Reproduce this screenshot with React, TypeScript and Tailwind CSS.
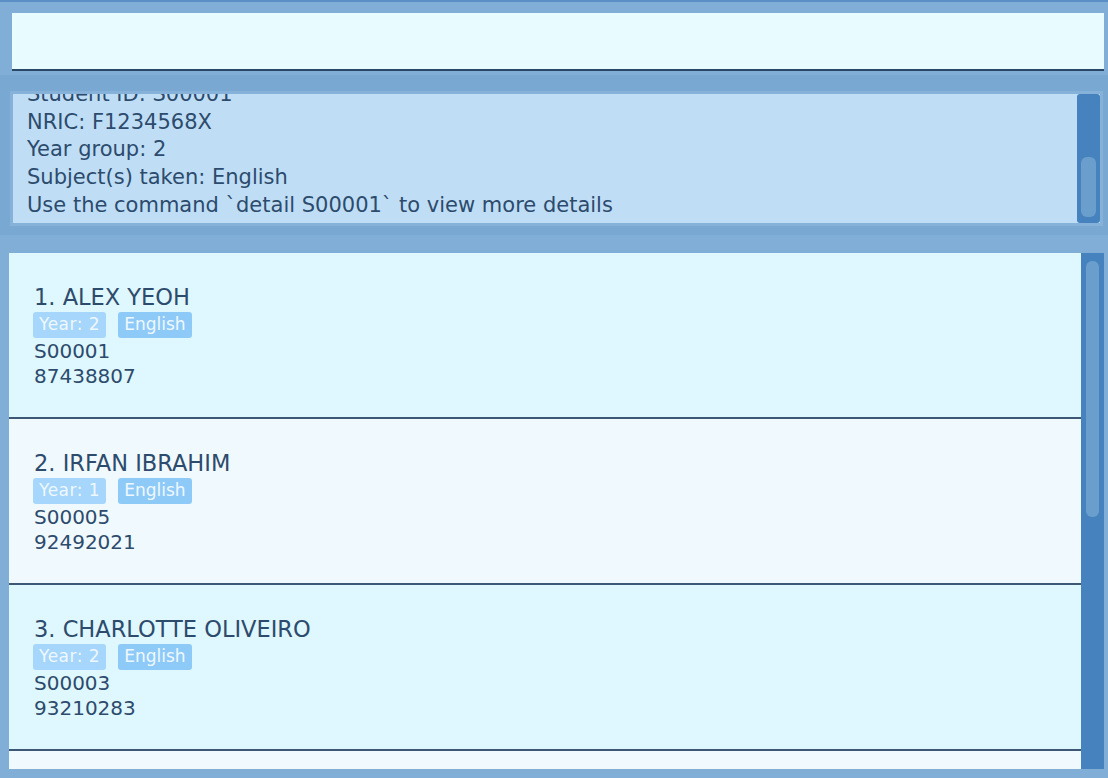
import React from "react";

const students = [
  { idx: 1, name: "ALEX YEOH", year: 2, subject: "English", id: "S00001", phone: "87438807" },
  { idx: 2, name: "IRFAN IBRAHIM", year: 1, subject: "English", id: "S00005", phone: "92492021" },
  { idx: 3, name: "CHARLOTTE OLIVEIRO", year: 2, subject: "English", id: "S00003", phone: "93210283" },
];

const font = { fontFamily: '"DejaVu Sans", Verdana, sans-serif' };

function StudentCard({ s, odd }: { s: (typeof students)[number]; odd: boolean }) {
  return (
    <div
      className={`h-[166px] shrink-0 border-b-2 border-[#3d5877] pl-[25px] pt-[31px] ${
        odd ? "bg-[#dff7fe]" : "bg-[#f0f9fe]"
      }`}
    >
      <div className="text-[22.5px] leading-[26px] text-[#2d4b6c]">
        {s.idx}. {s.name}
      </div>
      <div className="mt-[2px] flex gap-[12px] -ml-[1px]">
        <span className="flex h-[26px] items-center rounded-[3px] bg-[#a6d6fb] px-[6px] text-[17px] tracking-[0.5px] text-[#eef8ff]">
          Year: {s.year}
        </span>
        <span className="flex h-[26px] items-center rounded-[3px] bg-[#8ecaf8] px-[6px] text-[17px] text-[#eef8ff]">
          {s.subject}
        </span>
      </div>
      <div className="mt-[1px] text-[20px] leading-[25px] text-[#2d4b6c]">{s.id}</div>
      <div className="text-[20px] leading-[25px] text-[#2d4b6c]">{s.phone}</div>
    </div>
  );
}

export default function App() {
  return (
    <div className="flex h-[778px] w-[1108px] flex-col overflow-hidden bg-[#80aed7]" style={font}>
      {/* COMMAND BOX */}
      <div className="h-[75px] shrink-0 border-t-2 border-[#5b8ec4] px-[12px] pt-[11px]">
        <div className="h-[58px] w-[1092px] border-b-2 border-[#2a4766] bg-[#e8fbfe]" />
      </div>

      {/* RESULT DISPLAY */}
      <div className="h-[160px] shrink-0 bg-[#79a9d3] px-[10px] pt-[16px]">
        <div className="flex h-[135px] w-[1093px] border-[3px] border-[#86b2d9] bg-[#bfdef6]">
          <div className="flex-1 overflow-hidden pl-[14px] text-[21px] leading-[27.67px] text-[#2d4b6c]">
            <div className="-mt-[13px]">
              <div>Student ID: S00001</div>
              <div>NRIC: F1234568X</div>
              <div>Year group: 2</div>
              <div>Subject(s) taken: English</div>
              <div>Use the command `detail S00001` to view more details</div>
            </div>
          </div>
          <div className="ml-[2px] flex w-[23px] shrink-0 flex-col rounded-[3px] bg-[#4682be] px-[4px] pt-[63px] pb-[6px]">
            <div className="h-[60px] rounded-[6px] bg-[#6a9fcd]" />
          </div>
        </div>
      </div>

      {/* STUDENT LIST */}
      <div className="flex-1 px-[9px] pt-[18px] pb-[9px]">
        <div className="flex h-[516px] w-[1095px] overflow-hidden">
          <div className="flex flex-1 flex-col overflow-hidden">
            {students.map((s, i) => (
              <StudentCard key={s.id} s={s} odd={i % 2 === 0} />
            ))}
            <div className="flex-1 bg-[#f0f9fe]" />
          </div>
          <div className="w-[23px] shrink-0 bg-[#4682be] px-[5px] pt-[8px]">
            <div className="h-[256px] rounded-[6px] bg-[#6a9fcd]" />
          </div>
        </div>
      </div>
    </div>
  );
}
